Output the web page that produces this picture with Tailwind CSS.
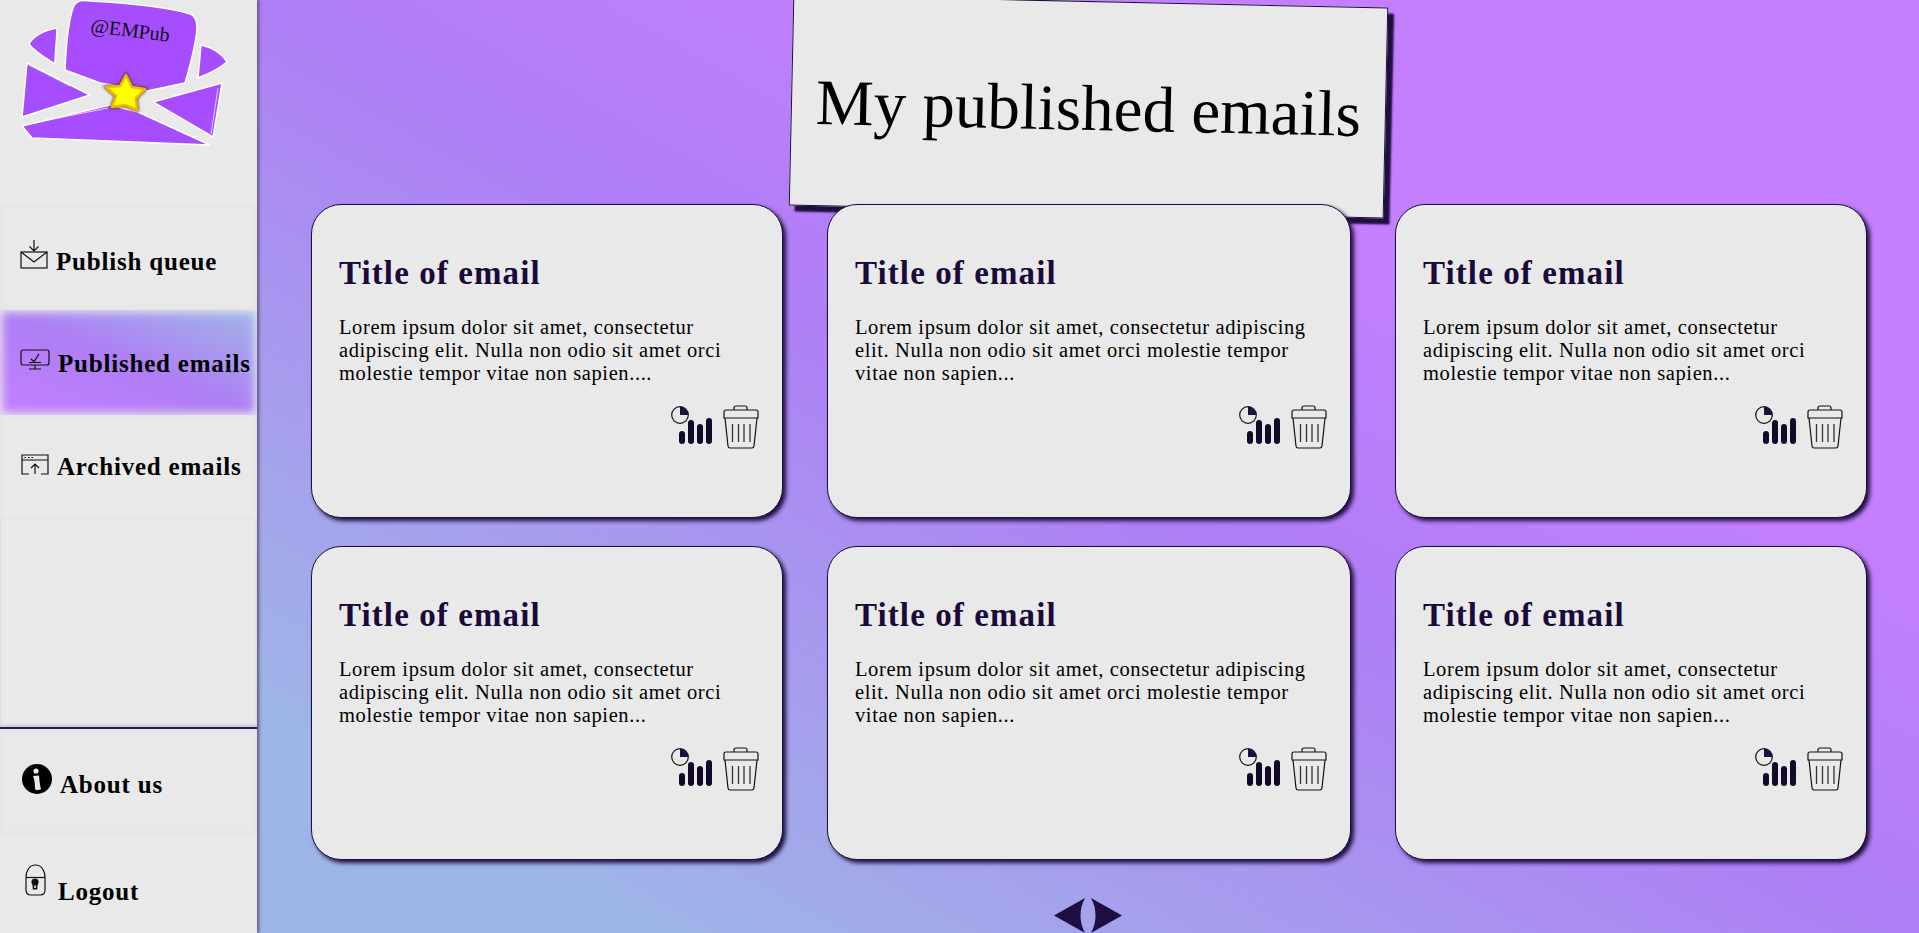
<!DOCTYPE html>
<html lang="en">
<head>
  <meta charset="UTF-8">
  <title>My published emails</title>
  <script src="https://cdn.jsdelivr.net/npm/@tailwindcss/browser@4"></script>
</head>
<body class="h-screen overflow-hidden flex font-['Liberation_Serif',serif] text-black bg-[#e9e9e9]">
  <!-- Sidebar -->
  <aside class="relative z-20 w-[257px] shrink-0 h-full flex flex-col bg-[#e9e9e9] shadow-[2px_0_3px_#5f5580]">
    <div class="h-[205px] shrink-0">
      <svg width="257" height="205" viewBox="0 0 257 205">
        <defs>
          <filter id="glow" x="-30%" y="-30%" width="160%" height="160%"><feGaussianBlur stdDeviation="1.5"/></filter>
        </defs>
        <g fill="#a64dff" stroke="#fff" stroke-width="1.5" stroke-linejoin="round">
          <path d="M65 70 C66 45 69 20 73 8 C76 0 82 0 90 1 C125 3 165 6 190 14 C196 16 197 22 197 30 C195 48 190 66 185 83 L147 91 L100 83 Z"/>
          <path d="M57 28 C44 30 33 36 29 44 C34 51 45 58 55 64 C55 50 57 40 57 28 Z"/>
          <path d="M201 45 C212 47 222 54 227 62 C220 68 208 74 198 78 C199 66 200 55 201 45 Z"/>
          <path d="M27 63 L90 95 L22 117 Z"/>
          <path d="M222 83 L213 137 L153 102 Z"/>
          <path d="M22 126 L110 105 L138 112 L210 145 L32 138 Z"/>
        </g>
        <path d="M29 65 L70 86 M24 125 L108 108 M218 88 L211 134" fill="none" stroke="#fff" stroke-width="0.7"/>
        <text x="90" y="32" transform="rotate(7 90 32)" font-family="Liberation Serif, serif" font-size="20" fill="#111">@EMPub</text>
        <path filter="url(#glow)" fill="#3a2a10" stroke="#3a2a10" stroke-width="3" d="M126 75 L132 87 L145 89 L136 98 L137 110 L125 105 L112 107 L116 96 L106 87 L120 86 Z"/>
        <path fill="#ffff00" stroke="#f2b600" stroke-width="2.5" stroke-linejoin="round" d="M126 75 L132 87 L145 89 L136 98 L137 110 L125 105 L112 107 L116 96 L106 87 L120 86 Z"/>
      </svg>
    </div>

    <a href="#" class="h-[105px] shrink-0 flex items-center pl-[20px] text-[25px] font-bold tracking-[0.8px] shadow-[inset_0_0_6px_#e2e0e4]">
      <svg class="mb-[8px] mr-[8px]" width="28" height="30" viewBox="0 0 28 30" fill="none" stroke="#111" stroke-width="1.2">
        <rect x="1" y="13" width="26" height="16"/>
        <path d="M1 13 L14 23 L27 13"/>
        <path d="M14 1 V12 M9.500 7.500 L14 12 L18.500 7.500"/>
      </svg>
      <span class="mt-[8px]">Publish queue</span>
    </a>
    <a href="#" class="h-[105px] shrink-0 flex items-center pl-[20px] text-[25px] font-bold tracking-[0.8px] whitespace-nowrap bg-linear-to-bl from-[#9db5e6] via-[#ae7ef5] to-[#c47fff] shadow-[inset_0_0_10px_2px_#e9e9e9]">
      <svg class="mb-[6px] mr-[8px] shrink-0" width="30" height="21" viewBox="0 0 30 21" fill="none" stroke="#111" stroke-width="1.2">
        <rect x="1" y="1" width="28" height="15" rx="2"/>
        <path d="M11 10 L14 12.500 L19 5 M9 13.500 H21 M15 16 V20 M9 20 H21"/>
      </svg>
      <span class="mt-[2px]">Published emails</span>
    </a>
    <a href="#" class="h-[104px] shrink-0 flex items-center pl-[21px] text-[25px] font-bold tracking-[0.8px] shadow-[inset_0_0_6px_#e2e0e4]">
      <svg class="mb-[6px] mr-[8px]" width="28" height="21" viewBox="0 0 28 21" fill="none" stroke="#111" stroke-width="1.2">
        <path d="M8 20 H1 V1 H27 V20 H20 M1 6 H27"/>
        <path d="M14 20 V10 M10 14 L14 10 L18 14"/>
        <path d="M3.500 3.500 H5 M7 3.500 H8.500 M10.500 3.500 H12" stroke-width="1"/>
      </svg>
      <span>Archived emails</span>
    </a>

    <div class="flex-1 border-b-2 border-[#2c1a55] shadow-[0_-2px_3px_#c9c6d0_inset]"></div>

    <a href="#" class="h-[105px] shrink-0 flex items-center pl-[21px] text-[25px] font-bold tracking-[0.8px] shadow-[inset_0_0_6px_#e2e0e4]">
      <svg class="mb-[6px] mr-[7px]" width="32" height="32" viewBox="0 0 32 32">
        <circle cx="16" cy="16" r="15" fill="#000"/>
        <circle cx="15" cy="8" r="2.600" fill="#e9e9e9"/>
        <path d="M12 13 L18 12.500 C18.500 17 18.700 22 20 26 C18 27.500 15 27.500 14 26 C14 21 13.700 17 12 13 Z" fill="#e9e9e9"/>
      </svg>
      <span class="mt-[6px]">About us</span>
    </a>
    <a href="#" class="h-[99px] shrink-0 flex items-center pl-[25px] text-[25px] font-bold tracking-[0.8px]">
      <svg class="mb-[8px] mr-[12px]" width="21" height="32" viewBox="0 0 21 32" fill="none" stroke="#111" stroke-width="1.2">
        <path d="M1 14 C1 6 5 1 10.500 1 C16 1 20 6 20 14 V26 C20 29 18 31 15 31 H6 C3 31 1 29 1 26 Z"/>
        <path d="M1 13.500 H20"/>
        <circle cx="10" cy="18" r="3" fill="#111"/>
        <path d="M8 19 H12 L11.700 25 H8.300 Z" fill="#111"/>
        <rect x="9.200" y="21.500" width="1.600" height="2.500" fill="#e9e9e9" stroke="none"/>
      </svg>
      <span class="mt-[16px]">Logout</span>
    </a>
  </aside>

  <!-- Main -->
  <main class="flex-1 h-full bg-linear-to-tr from-[#9db5e6] from-[12%] via-[#ae7ef5] via-[50%] to-[#c47fff] to-[70%]">
    <div class="w-[595px] h-[211px] mx-auto mt-px rotate-[1.25deg] flex items-center justify-center pt-[4px] bg-[#e9e9e9] border border-[#1f0f40] shadow-[6px_6px_2px_#1f0f40]">
      <h1 class="text-[65px] font-normal whitespace-nowrap">My published emails</h1>
    </div>

    <div class="relative z-10 -mt-[8px] ml-[54px] grid grid-cols-[472px_524px_472px] grid-rows-[314px_314px] gap-x-[44px] gap-y-[28px]">
      <article class="flex flex-col bg-[#e9e9e9] border border-[#1f0f40] rounded-[30px] shadow-[3px_3px_4px_#1f0f40] pl-[27px] pr-[23px] pt-[50px]">
        <h2 class="text-[33px] leading-[36px] font-bold tracking-[1.1px] text-[#1a0a3a]">Title of email</h2>
        <p class="mt-[25px] text-[20.5px] leading-[23px] tracking-[0.6px]">Lorem ipsum dolor sit amet, consectetur<br>adipiscing elit. Nulla non odio sit amet orci<br>molestie tempor vitae non sapien....</p>
        <div class="mt-[20px] flex justify-end items-start gap-[10px]">
          <svg width="42" height="39" viewBox="0 0 42 39"><circle cx="9" cy="10" r="8.300" fill="#e9e9e9" stroke="#111" stroke-width="1.2"/><path d="M9 10 V1.700 A8.300 8.300 0 0 1 17.300 10 Z" fill="#1f0f40"/><g fill="#120a28"><rect x="8" y="26" width="6" height="13" rx="3"/><rect x="17" y="15" width="6" height="24" rx="3"/><rect x="26" y="19" width="6" height="20" rx="3"/><rect x="35" y="13" width="6" height="26" rx="3"/></g></svg>
          <svg width="36" height="44" viewBox="0 0 36 44" fill="none" stroke="#111" stroke-width="1.2"><path d="M11 5 V3 C11 1.500 12 1 13 1 H22 C23 1 24 1.500 24 3 V5"/><path d="M3 5 H33 C34.500 5 35 6 35 7 V13 H1 V7 C1 6 1.500 5 3 5 Z"/><path d="M2 13 L5 41 C5.200 42.500 6 43 7 43 H29 C30 43 30.800 42.500 31 41 L34 13"/><path d="M9.500 19 V37 M15.500 19 V37 M21 19 V37 M27 19 V37" stroke="#333" stroke-width="1.3"/></svg>
        </div>
      </article>
      <article class="flex flex-col bg-[#e9e9e9] border border-[#1f0f40] rounded-[30px] shadow-[3px_3px_4px_#1f0f40] pl-[27px] pr-[23px] pt-[50px]">
        <h2 class="text-[33px] leading-[36px] font-bold tracking-[1.1px] text-[#1a0a3a]">Title of email</h2>
        <p class="mt-[25px] text-[20.5px] leading-[23px] tracking-[0.6px]">Lorem ipsum dolor sit amet, consectetur adipiscing<br>elit. Nulla non odio sit amet orci molestie tempor<br>vitae non sapien...</p>
        <div class="mt-[20px] flex justify-end items-start gap-[10px]">
          <svg width="42" height="39" viewBox="0 0 42 39"><circle cx="9" cy="10" r="8.300" fill="#e9e9e9" stroke="#111" stroke-width="1.2"/><path d="M9 10 V1.700 A8.300 8.300 0 0 1 17.300 10 Z" fill="#1f0f40"/><g fill="#120a28"><rect x="8" y="26" width="6" height="13" rx="3"/><rect x="17" y="15" width="6" height="24" rx="3"/><rect x="26" y="19" width="6" height="20" rx="3"/><rect x="35" y="13" width="6" height="26" rx="3"/></g></svg>
          <svg width="36" height="44" viewBox="0 0 36 44" fill="none" stroke="#111" stroke-width="1.2"><path d="M11 5 V3 C11 1.500 12 1 13 1 H22 C23 1 24 1.500 24 3 V5"/><path d="M3 5 H33 C34.500 5 35 6 35 7 V13 H1 V7 C1 6 1.500 5 3 5 Z"/><path d="M2 13 L5 41 C5.200 42.500 6 43 7 43 H29 C30 43 30.800 42.500 31 41 L34 13"/><path d="M9.500 19 V37 M15.500 19 V37 M21 19 V37 M27 19 V37" stroke="#333" stroke-width="1.3"/></svg>
        </div>
      </article>
      <article class="flex flex-col bg-[#e9e9e9] border border-[#1f0f40] rounded-[30px] shadow-[3px_3px_4px_#1f0f40] pl-[27px] pr-[23px] pt-[50px]">
        <h2 class="text-[33px] leading-[36px] font-bold tracking-[1.1px] text-[#1a0a3a]">Title of email</h2>
        <p class="mt-[25px] text-[20.5px] leading-[23px] tracking-[0.6px]">Lorem ipsum dolor sit amet, consectetur<br>adipiscing elit. Nulla non odio sit amet orci<br>molestie tempor vitae non sapien...</p>
        <div class="mt-[20px] flex justify-end items-start gap-[10px]">
          <svg width="42" height="39" viewBox="0 0 42 39"><circle cx="9" cy="10" r="8.300" fill="#e9e9e9" stroke="#111" stroke-width="1.2"/><path d="M9 10 V1.700 A8.300 8.300 0 0 1 17.300 10 Z" fill="#1f0f40"/><g fill="#120a28"><rect x="8" y="26" width="6" height="13" rx="3"/><rect x="17" y="15" width="6" height="24" rx="3"/><rect x="26" y="19" width="6" height="20" rx="3"/><rect x="35" y="13" width="6" height="26" rx="3"/></g></svg>
          <svg width="36" height="44" viewBox="0 0 36 44" fill="none" stroke="#111" stroke-width="1.2"><path d="M11 5 V3 C11 1.500 12 1 13 1 H22 C23 1 24 1.500 24 3 V5"/><path d="M3 5 H33 C34.500 5 35 6 35 7 V13 H1 V7 C1 6 1.500 5 3 5 Z"/><path d="M2 13 L5 41 C5.200 42.500 6 43 7 43 H29 C30 43 30.800 42.500 31 41 L34 13"/><path d="M9.500 19 V37 M15.500 19 V37 M21 19 V37 M27 19 V37" stroke="#333" stroke-width="1.3"/></svg>
        </div>
      </article>
      <article class="flex flex-col bg-[#e9e9e9] border border-[#1f0f40] rounded-[30px] shadow-[3px_3px_4px_#1f0f40] pl-[27px] pr-[23px] pt-[50px]">
        <h2 class="text-[33px] leading-[36px] font-bold tracking-[1.1px] text-[#1a0a3a]">Title of email</h2>
        <p class="mt-[25px] text-[20.5px] leading-[23px] tracking-[0.6px]">Lorem ipsum dolor sit amet, consectetur<br>adipiscing elit. Nulla non odio sit amet orci<br>molestie tempor vitae non sapien...</p>
        <div class="mt-[20px] flex justify-end items-start gap-[10px]">
          <svg width="42" height="39" viewBox="0 0 42 39"><circle cx="9" cy="10" r="8.300" fill="#e9e9e9" stroke="#111" stroke-width="1.2"/><path d="M9 10 V1.700 A8.300 8.300 0 0 1 17.300 10 Z" fill="#1f0f40"/><g fill="#120a28"><rect x="8" y="26" width="6" height="13" rx="3"/><rect x="17" y="15" width="6" height="24" rx="3"/><rect x="26" y="19" width="6" height="20" rx="3"/><rect x="35" y="13" width="6" height="26" rx="3"/></g></svg>
          <svg width="36" height="44" viewBox="0 0 36 44" fill="none" stroke="#111" stroke-width="1.2"><path d="M11 5 V3 C11 1.500 12 1 13 1 H22 C23 1 24 1.500 24 3 V5"/><path d="M3 5 H33 C34.500 5 35 6 35 7 V13 H1 V7 C1 6 1.500 5 3 5 Z"/><path d="M2 13 L5 41 C5.200 42.500 6 43 7 43 H29 C30 43 30.800 42.500 31 41 L34 13"/><path d="M9.500 19 V37 M15.500 19 V37 M21 19 V37 M27 19 V37" stroke="#333" stroke-width="1.3"/></svg>
        </div>
      </article>
      <article class="flex flex-col bg-[#e9e9e9] border border-[#1f0f40] rounded-[30px] shadow-[3px_3px_4px_#1f0f40] pl-[27px] pr-[23px] pt-[50px]">
        <h2 class="text-[33px] leading-[36px] font-bold tracking-[1.1px] text-[#1a0a3a]">Title of email</h2>
        <p class="mt-[25px] text-[20.5px] leading-[23px] tracking-[0.6px]">Lorem ipsum dolor sit amet, consectetur adipiscing<br>elit. Nulla non odio sit amet orci molestie tempor<br>vitae non sapien...</p>
        <div class="mt-[20px] flex justify-end items-start gap-[10px]">
          <svg width="42" height="39" viewBox="0 0 42 39"><circle cx="9" cy="10" r="8.300" fill="#e9e9e9" stroke="#111" stroke-width="1.2"/><path d="M9 10 V1.700 A8.300 8.300 0 0 1 17.300 10 Z" fill="#1f0f40"/><g fill="#120a28"><rect x="8" y="26" width="6" height="13" rx="3"/><rect x="17" y="15" width="6" height="24" rx="3"/><rect x="26" y="19" width="6" height="20" rx="3"/><rect x="35" y="13" width="6" height="26" rx="3"/></g></svg>
          <svg width="36" height="44" viewBox="0 0 36 44" fill="none" stroke="#111" stroke-width="1.2"><path d="M11 5 V3 C11 1.500 12 1 13 1 H22 C23 1 24 1.500 24 3 V5"/><path d="M3 5 H33 C34.500 5 35 6 35 7 V13 H1 V7 C1 6 1.500 5 3 5 Z"/><path d="M2 13 L5 41 C5.200 42.500 6 43 7 43 H29 C30 43 30.800 42.500 31 41 L34 13"/><path d="M9.500 19 V37 M15.500 19 V37 M21 19 V37 M27 19 V37" stroke="#333" stroke-width="1.3"/></svg>
        </div>
      </article>
      <article class="flex flex-col bg-[#e9e9e9] border border-[#1f0f40] rounded-[30px] shadow-[3px_3px_4px_#1f0f40] pl-[27px] pr-[23px] pt-[50px]">
        <h2 class="text-[33px] leading-[36px] font-bold tracking-[1.1px] text-[#1a0a3a]">Title of email</h2>
        <p class="mt-[25px] text-[20.5px] leading-[23px] tracking-[0.6px]">Lorem ipsum dolor sit amet, consectetur<br>adipiscing elit. Nulla non odio sit amet orci<br>molestie tempor vitae non sapien...</p>
        <div class="mt-[20px] flex justify-end items-start gap-[10px]">
          <svg width="42" height="39" viewBox="0 0 42 39"><circle cx="9" cy="10" r="8.300" fill="#e9e9e9" stroke="#111" stroke-width="1.2"/><path d="M9 10 V1.700 A8.300 8.300 0 0 1 17.300 10 Z" fill="#1f0f40"/><g fill="#120a28"><rect x="8" y="26" width="6" height="13" rx="3"/><rect x="17" y="15" width="6" height="24" rx="3"/><rect x="26" y="19" width="6" height="20" rx="3"/><rect x="35" y="13" width="6" height="26" rx="3"/></g></svg>
          <svg width="36" height="44" viewBox="0 0 36 44" fill="none" stroke="#111" stroke-width="1.2"><path d="M11 5 V3 C11 1.500 12 1 13 1 H22 C23 1 24 1.500 24 3 V5"/><path d="M3 5 H33 C34.500 5 35 6 35 7 V13 H1 V7 C1 6 1.500 5 3 5 Z"/><path d="M2 13 L5 41 C5.200 42.500 6 43 7 43 H29 C30 43 30.800 42.500 31 41 L34 13"/><path d="M9.500 19 V37 M15.500 19 V37 M21 19 V37 M27 19 V37" stroke="#333" stroke-width="1.3"/></svg>
        </div>
      </article>
    </div>

    <!-- Pagination -->
    <div class="mt-[38px] flex justify-center gap-[6px]">
      <a href="#"><svg class="block" width="31" height="35" viewBox="0 0 31 35" fill="#1f0f40"><path d="M0 17.500 L31 0 C25 11 25 24 31 35 Z"/></svg></a>
      <a href="#"><svg class="block" width="31" height="35" viewBox="0 0 31 35" fill="#1f0f40"><path d="M31 17.500 L0 0 C6 11 6 24 0 35 Z"/></svg></a>
    </div>
  </main>
</body>
</html>
